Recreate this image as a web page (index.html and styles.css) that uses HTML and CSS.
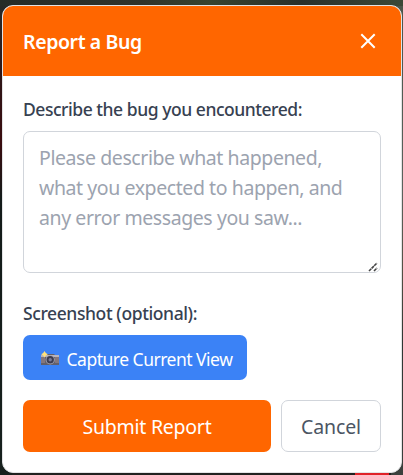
FILE: index.html
```html
<!DOCTYPE html>
<html lang="en">
<head>
<meta charset="utf-8">
<title>Report a Bug</title>
<link rel="stylesheet" href="styles.css">
</head>
<body>
<main class="dialog">
  <header class="header">
    <h1 class="title">Report a Bug</h1>
    <button class="close" aria-label="Close">
      <svg width="16" height="16" viewBox="0 0 16 16"><path d="M1.3 1.3 14.7 14.7M14.7 1.3 1.3 14.7" stroke="#fff" stroke-width="2" fill="none"/></svg>
    </button>
  </header>
  <form class="body">
    <label class="label label-desc" for="desc">Describe the bug you encountered:</label>
    <div class="field">
      <textarea class="input" id="desc" placeholder="Please describe what happened, what you expected to happen, and any error messages you saw..."></textarea>
      <svg class="grip" width="10" height="10" viewBox="0 0 10 10"><path d="M1 9 9 1M6 9 9 6" stroke="#444" stroke-width="1.6" stroke-dasharray="3.2 .5" fill="none"/></svg>
    </div>
    <div class="label label-shot">Screenshot (optional):</div>
    <button type="button" class="capture">
      <svg class="camera" width="20" height="16" viewBox="0 0 20 16">
        <path d="M1 4h3l2-1h8l1 1h4v10H1z" fill="#62606b"/>
        <path d="M1 4h18v2H1z" fill="#b9b4ba"/>
        <path d="M1 6h4v6H1zM15 6h4v6h-4z" fill="#85777b"/>
        <circle cx="10.2" cy="8.8" r="4.6" fill="#a5a5b3"/>
        <circle cx="10.2" cy="8.8" r="3.7" fill="#3b3c50"/>
        <circle cx="10.2" cy="8.8" r="1.7" fill="#777b9a"/>
        <path d="m4.5 0 1.3 1.9 2 1.3-2 1.3-1.3 2-1.3-2-2-1.3 2-1.3z" fill="#ffe17a"/>
      </svg>
      <span class="capture-text">Capture Current View</span>
    </button>
    <div class="actions">
      <button type="button" class="submit"><span>Submit Report</span></button>
      <button type="button" class="cancel"><span>Cancel</span></button>
    </div>
  </form>
</main>
</body>
</html>
```
FILE: styles.css
```css
* { box-sizing: border-box; }
html, body { height: 100%; }
body {
  margin: 0;
  padding: 5px 1px 2px 2px;
  overflow: hidden;
  font-family: "Noto Sans", "Open Sans", sans-serif;
  background:
    linear-gradient(#e02228, #e02228) 355px 473px / 34px 2px no-repeat,
    linear-gradient(90deg, #252c28, #30332b 35%, #37442f 52%, #29302b 75%, #3c4937) 0 0 / 100% 6px no-repeat,
    linear-gradient(#252b29, #301416 18%, #3a0c0f 30%, #131b19 42%, #17201d) 0 0 / 12px 100% no-repeat,
    linear-gradient(#4b5549, #5b625d 40%, #555044 57%, #303633 72%, #3b403d) 100% 0 / 12px 100% no-repeat,
    #20211f;
}
button, textarea { font: inherit; margin: 0; }
button { border: 0; padding: 0; white-space: nowrap; }
.dialog {
  height: 468px;
  background: #fff;
  border: 1px solid #e2e3e5;
  border-radius: 11px;
  overflow: hidden;
}
.header {
  height: 70px;
  padding: 0 25px 0 20px;
  display: flex;
  align-items: center;
  justify-content: space-between;
  background: #ff6600;
  color: #fff;
}
.title { margin: 2px 0 0; font-size: 19.5px; line-height: 28px; font-weight: 600; letter-spacing: -.4px; }
.close { display: flex; background: none; }
.body { display: flex; flex-direction: column; padding: 20px; }
.label { font-size: 17.5px; line-height: 26px; font-weight: 500; color: #374151; white-space: nowrap; letter-spacing: -.46px; }
.field { position: relative; height: 142px; margin-top: 9px; }
.input {
  display: block;
  width: 100%;
  height: 100%;
  padding: 11px 15px;
  border: 1px solid #d1d5db;
  border-radius: 7px;
  resize: none;
  font-size: 19.5px;
  line-height: 30px;
  letter-spacing: -.42px;
  background: #fff;
}
.input::placeholder { color: #9ca3af; opacity: 1; }
.grip { position: absolute; right: 3px; bottom: 1px; }
.label-shot { margin-top: 27px; letter-spacing: -.4px; }
.capture {
  display: flex;
  align-items: center;
  width: 224px;
  height: 45px;
  margin-top: 9px;
  padding: 2px 0 0 17px;
  gap: 6.5px;
  border-radius: 7px;
  background: #3b82f6;
  color: #fff;
  font-size: 17.5px;
  letter-spacing: -.5px;
}
.actions { display: flex; gap: 10px; height: 52px; margin-top: 20px; font-size: 19.5px; }
.submit { flex: 1; padding-top: 1px; border-radius: 7px; background: #ff6600; color: #fff; letter-spacing: -.25px; }
.cancel { width: 100px; padding-top: 1px; border: 1px solid #d1d5db; border-radius: 7px; background: #fff; color: #4b5563; letter-spacing: -.15px; }
```
